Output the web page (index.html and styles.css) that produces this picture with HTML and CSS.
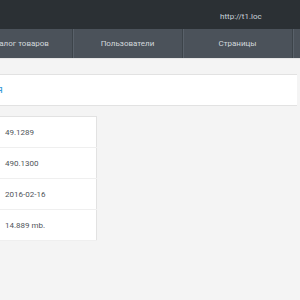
FILE: index.html
```html
<!DOCTYPE html>
<html lang="ru">
<head>
    <meta charset="UTF-8">
    <meta name="viewport" content="width=device-width, initial-scale=1.0">
    <title>Информация</title>
    <link rel="stylesheet" href="styles.css">
</head>
<body>
    <div class="topbar">
        <span class="site-url">http://t1.loc</span>
    </div>
    <div class="nav">
        <a class="nav-item" href="#">Каталог товаров</a>
        <a class="nav-item" href="#">Пользователи</a>
        <a class="nav-item" href="#">Страницы</a>
        <a class="nav-item" href="#">Настройки</a>
    </div>
    <div class="main">
        <div class="panel">
            <h2 class="panel-title">Информация</h2>
        </div>
        <table class="info">
            <tr><td class="label">Версия PHP</td><td class="value">49.1289</td></tr>
            <tr><td class="label">Версия MySQL</td><td class="value">490.1300</td></tr>
            <tr><td class="label">Дата</td><td class="value">2016-02-16</td></tr>
            <tr><td class="label">Размер</td><td class="value">14.889 mb.</td></tr>
        </table>
    </div>
</body>
</html>
```

FILE: styles.css
```css
body {
    margin: 0;
    background: #f4f4f4;
    font-family: Roboto, "Liberation Sans", sans-serif;
    overflow: hidden;
}
.topbar {
    height: 29px;
    background: #2b3034;
    padding-left: 220px;
    line-height: 28px;
}
.site-url {
    color: #c9d2da;
    font-size: 8px;
}
.nav {
    display: flex;
    height: 29px;
    margin-left: -37px;
    background: #4b525a;
    border-bottom: 1px solid #e6e6e6;
}
.nav-item {
    flex: 0 0 110px;
    box-sizing: border-box;
    text-align: center;
    line-height: 29px;
    font-size: 8px;
    color: #d3d8dc;
    text-decoration: none;
    border-right: 1px solid #3d444a;
    box-shadow: inset 1px 0 #59616a;
}
.main {
    margin-left: -120px;
    padding-top: 15px;
}
.panel {
    width: 417px;
    height: 30px;
    background: #fff;
    border-top: 1px solid #e2e2e2;
    border-bottom: 1px solid #e2e2e2;
}
.panel-title {
    margin: 0;
    padding-left: 55px;
    line-height: 30px;
    font-size: 11px;
    font-weight: normal;
    color: #3a9ad8;
}
.info {
    margin-top: 10px;
    width: 217px;
    border-collapse: collapse;
    background: #fff;
    border: 1px solid #e2e2e2;
    font-size: 8px;
    color: #4f5459;
}
.info td {
    height: 30px;
    padding: 0;
    border-bottom: 1px solid #efefef;
}
.info .label {
    width: 120px;
}
.info .value {
    padding-left: 4px;
}
```
